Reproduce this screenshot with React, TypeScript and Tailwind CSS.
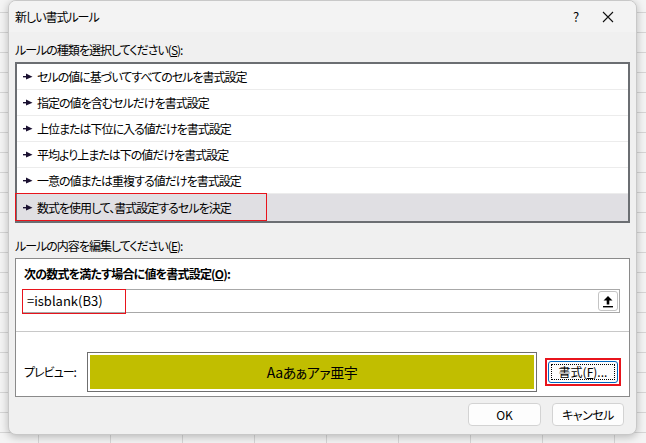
import React from "react";

const RULES = [
  "セルの値に基づいてすべてのセルを書式設定",
  "指定の値を含むセルだけを書式設定",
  "上位または下位に入る値だけを書式設定",
  "平均より上または下の値だけを書式設定",
  "一意の値または重複する値だけを書式設定",
  "数式を使用して、書式設定するセルを決定",
];

function Pointer() {
  return (
    <svg width="10" height="7" viewBox="0 0 10 7" className="shrink-0">
      <rect x="0" y="3" width="4" height="1.4" fill="#1a1030" />
      <path d="M3 0.5 L9.5 3.7 L3 6.5 Z" fill="#1a1030" />
    </svg>
  );
}

function UploadIcon() {
  return (
    <svg width="12" height="13" viewBox="0 0 12 13">
      <path d="M6 1 L10.5 5.5 L7.3 5.5 L7.3 9.5 L4.7 9.5 L4.7 5.5 L1.5 5.5 Z" fill="#000" />
      <rect x="1" y="11" width="10" height="1.4" fill="#000" />
    </svg>
  );
}

export default function App() {
  return (
    <div className="w-[646px] h-[443px] overflow-hidden bg-[#f4f4f4] bg-[linear-gradient(to_right,#d6d6d6_1px,transparent_1px),linear-gradient(to_bottom,#d6d6d6_1px,transparent_1px)] bg-[size:72px_20px] bg-[position:38px_12px] font-['Noto_Sans_CJK_JP',sans-serif] text-[12px] text-black [font-feature-settings:'palt']">
      <div className="ml-[8px] w-[629px] h-[435px] flex flex-col rounded-lg bg-[#f0f0f0] border border-[#c8c8c8] shadow-[0_2px_8px_rgba(0,0,0,0.25)] overflow-hidden">
        {/* title bar */}
        <div className="h-[31px] shrink-0 flex items-center bg-[#f3f3f3] pl-[6px] pr-[22px]">
          <span className="flex-1 leading-none tracking-[-1px]">新しい書式ルール</span>
          <span className="w-[36px] text-center text-[13px] mr-[8px]">?</span>
          <svg width="12" height="12" viewBox="0 0 12 12">
            <path d="M1 1 L11 11 M11 1 L1 11" stroke="#111" strokeWidth="1.1" />
          </svg>
        </div>

        <div className="flex flex-col px-[6px]">
          <div className="mt-[10px] h-[16px] leading-[16px] tracking-[-1px]">
            ルールの種類を選択してください(<span className="underline">S</span>):
          </div>

          {/* rule type list */}
          <div className="mt-[4px] h-[161px] border-2 border-[#6b6e72] bg-white flex flex-col">
            {RULES.map((r, i) => {
              const sel = i === RULES.length - 1;
              return (
                <div
                  key={r}
                  className={
                    sel
                      ? "relative h-[27px] flex items-center gap-[4px] pl-[6px] bg-[#e0dfe3]"
                      : "h-[26px] flex items-center gap-[4px] pl-[6px] border-b border-[#ececec]"
                  }
                >
                  <Pointer />
                  <span className="tracking-[-1px]">{r}</span>
                  {sel && (
                    <div className="absolute left-[-2px] top-[-1px] w-[252px] h-[28px] border-[1.5px] border-[#e8141c]" />
                  )}
                </div>
              );
            })}
          </div>

          <div className="mt-[15px] h-[16px] leading-[16px] tracking-[-1px]">
            ルールの内容を編集してください(<span className="underline">E</span>):
          </div>

          {/* rule description panel */}
          <div className="mt-[4px] h-[139px] border border-[#8a8a8a] bg-white flex flex-col">
            <div className="mt-[7px] ml-[8px] h-[16px] leading-[16px] font-bold tracking-[-0.8px]">
              次の数式を満たす場合に値を書式設定(<span className="underline">O</span>):
            </div>
            <div className="mt-[7px] ml-[6px] mr-[9px] h-[24px] border border-[#a8a8a8] flex items-center relative">
              <span className="pl-[4px] text-[13px]">=isblank(B3)</span>
              <div className="absolute left-[-1px] top-[-1px] w-[104px] h-[25px] border-[1.5px] border-[#e8141c]" />
              <div className="ml-auto mr-[1px] w-[20px] h-[20px] rounded-[3px] border border-[#c4c4c4] bg-white flex items-center justify-center">
                <UploadIcon />
              </div>
            </div>
            <div className="mt-[18px] h-px bg-[#c8c8c8]" />
            <div className="mt-[20px] flex items-center">
              <span className="ml-[8px] w-[63px] tracking-[-1px]">プレビュー:</span>
              <div className="w-[450px] h-[40px] border border-[#6f6f6f] p-[2px] bg-white">
                <div className="w-full h-full bg-[#c1be00] flex items-center justify-center text-[14px] tracking-[-0.5px]">
                  Aaあぁアァ亜宇
                </div>
              </div>
              <div className="ml-[8px] w-[76px] h-[28px] border-2 border-[#e8141c] p-px">
                <div className="w-full h-full rounded-[3px] border border-[#0067c0] bg-[#fdfdfd] p-[2px]">
                  <div className="w-full h-full border border-dotted border-black flex items-center justify-center">
                    書式(<span className="underline">F</span>)...
                  </div>
                </div>
              </div>
            </div>
          </div>

          {/* buttons */}
          <div className="mt-[6px] flex justify-end gap-[11px] pr-[6px]">
            <div className="w-[73px] h-[23px] rounded-[4px] border border-[#d3d3d3] bg-[#fdfdfd] flex items-center justify-center">
              OK
            </div>
            <div className="w-[72px] h-[23px] rounded-[4px] border border-[#d3d3d3] bg-[#fdfdfd] flex items-center justify-center tracking-[-0.5px]">
              キャンセル
            </div>
          </div>
        </div>
      </div>
    </div>
  );
}
